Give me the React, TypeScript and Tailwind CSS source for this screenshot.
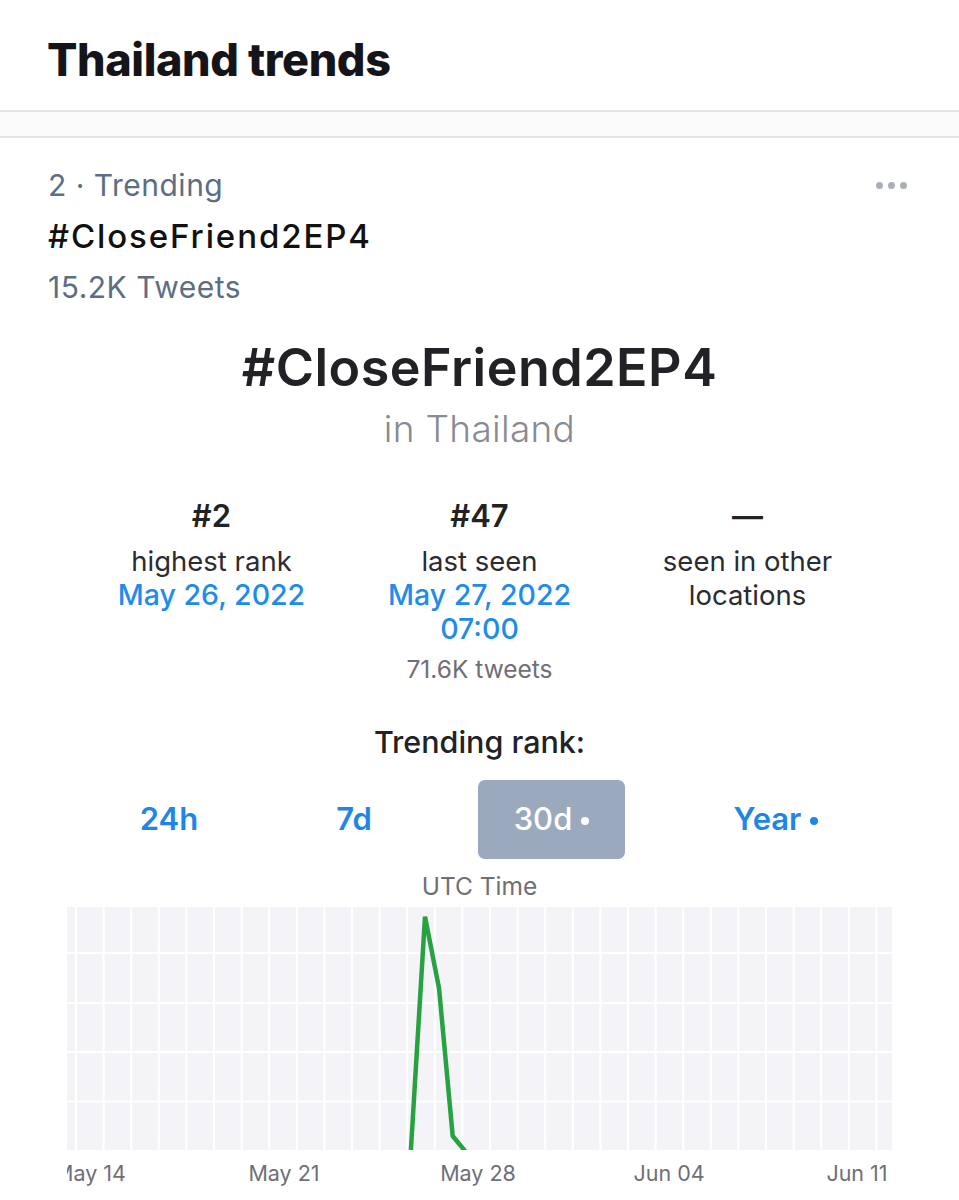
import React from "react";

const font = { fontFamily: "Inter, 'Noto Sans', sans-serif" };

function Chart() {
  const W = 825;
  const H = 243;
  const vLines: number[] = [];
  for (let k = 0; k < 30; k++) vLines.push(9 + 27.6 * k);
  const hLines = [46, 96, 145, 194.5];
  const labels: [string, number][] = [
    ["May 14", 23],
    ["May 21", 217],
    ["May 28", 411],
    ["Jun 04", 602],
    ["Jun 11", 790],
  ];
  return (
    <svg width={W} height={290} viewBox={`0 0 ${W} 290`} className="block">
      <defs>
        <clipPath id="plot">
          <rect x="0" y="0" width={W} height={H} />
        </clipPath>
      </defs>
      <rect x="0" y="0" width={W} height={H} fill="#f4f3f7" />
      {vLines.map((x, i) => (
        <rect key={i} x={x - 1} y={0} width={2} height={H} fill="#ffffff" />
      ))}
      {hLines.map((y, i) => (
        <rect key={i} x={0} y={y - 1} width={W} height={2} fill="#ffffff" />
      ))}
      <polyline
        clipPath="url(#plot)"
        points="343.7,246 358,9.7 372,81 385.7,229 398,244"
        fill="none"
        stroke="#27a241"
        strokeWidth="4.5"
        strokeLinejoin="miter"
      />
      {labels.map(([t, x]) => (
        <text
          key={t}
          x={x}
          y={274}
          textAnchor="middle"
          fontSize="21.5"
          fill="#6f6f76"
          style={font}
        >
          {t}
        </text>
      ))}
    </svg>
  );
}

function Tab({ label, active, dot, w }: { label: string; active?: boolean; dot?: boolean; w: string }) {
  return (
    <div className={`${w} flex justify-center`}>
      {active ? (
        <div className="w-[147px] h-[79px] rounded-[7px] bg-[#9ba9bd] flex items-center justify-center text-white text-[31px] font-medium">
          {label}
          {dot && <span className="ml-[9px] w-[8px] h-[8px] rounded-full bg-white inline-block mt-[2px]" />}
        </div>
      ) : (
        <div className="h-[79px] flex items-center text-[#1d86e8] text-[31px] font-semibold">
          {label}
          {dot && <span className="ml-[9px] w-[8px] h-[8px] rounded-full bg-[#1d86e8] inline-block mt-[2px]" />}
        </div>
      )}
    </div>
  );
}

export default function App() {
  return (
    <div className="w-[959px] h-[1200px] bg-white overflow-hidden" style={font}>
      {/* Header */}
      <div className="h-[110px] flex items-center pl-[47px] pt-[8px]">
        <h1 className="text-[45px] font-extrabold text-[#141419] tracking-[-0.4px] leading-none">Thailand trends</h1>
      </div>
      <div className="h-[28px] border-t-2 border-b-2 border-[#e3e3e8] bg-[#fbfbfc]" />

      {/* Trend item */}
      <div className="relative pl-[48px] pt-[22px]">
        <div className="text-[30px] leading-[51px] tracking-[0.5px] text-[#5d6d83]">2 · Trending</div>
        <div className="text-[33px] leading-[51px] font-medium tracking-[1.9px] text-[#111]">#CloseFriend2EP4</div>
        <div className="text-[30px] leading-[51px] tracking-[0.5px] text-[#5d6d83]">15.2K Tweets</div>
        <div className="absolute right-[52px] top-[44px] flex gap-[5px]">
          <span className="w-[7px] h-[7px] rounded-full bg-[#a9afb8]" />
          <span className="w-[7px] h-[7px] rounded-full bg-[#a9afb8]" />
          <span className="w-[7px] h-[7px] rounded-full bg-[#a9afb8]" />
        </div>
      </div>

      {/* Embedded detail */}
      <div className="flex flex-col items-center mt-[27px]">
        <div className="text-[52px] leading-[56px] font-semibold text-[#222226] tracking-[0.5px]">#CloseFriend2EP4</div>
        <div className="mt-[9px] text-[37px] leading-[48px] font-light tracking-[0.3px] text-[#8a8a92]">in Thailand</div>

        <div className="mt-[43px] flex justify-center h-[188px]">
          <div className="w-[268px] flex flex-col items-center">
            <div className="text-[31px] leading-[40px] font-semibold text-[#222]">#2</div>
            <div className="mt-[8px] text-[27.5px] leading-[34px] text-[#2c2c30]">highest rank</div>
            <div className="text-[28.5px] leading-[34px] font-medium text-[#1f8ceb]">May 26, 2022</div>
            <div className="h-[6px] overflow-hidden text-[28px] leading-[34px] text-[#1f8ceb] opacity-20">10:00</div>
          </div>
          <div className="w-[268px] flex flex-col items-center">
            <div className="text-[31px] leading-[40px] font-semibold text-[#222]">#47</div>
            <div className="mt-[8px] text-[27.5px] leading-[34px] text-[#2c2c30]">last seen</div>
            <div className="text-[28.5px] leading-[34px] font-medium text-[#1f8ceb]">May 27, 2022</div>
            <div className="text-[28.5px] leading-[33px] font-medium text-[#1f8ceb]">07:00</div>
            <div className="mt-[9px] text-[24.5px] leading-[30px] text-[#6f6f76]">71.6K tweets</div>
          </div>
          <div className="w-[268px] flex flex-col items-center">
            <div className="text-[31px] leading-[40px] font-semibold text-[#222]">—</div>
            <div className="mt-[8px] text-[27.5px] leading-[34px] text-[#2c2c30]">seen in other</div>
            <div className="text-[27.5px] leading-[34px] text-[#2c2c30]">locations</div>
          </div>
        </div>

        <div className="mt-[38px] text-[30.5px] leading-[40px] font-medium text-[#222226]">Trending rank:</div>

        <div className="mt-[18px] w-[825px] flex">
          <Tab label="24h" w="w-[204px]" />
          <Tab label="7d" w="w-[166px]" />
          <Tab label="30d" active dot w="w-[229px]" />
          <Tab label="Year" dot w="w-[220px]" />
        </div>

        <div className="mt-[14px] text-[24.5px] leading-[26px] text-[#6f6f76]">UTC Time</div>

        <div className="mt-[8px] w-[825px]">
          <Chart />
        </div>
      </div>
    </div>
  );
}
